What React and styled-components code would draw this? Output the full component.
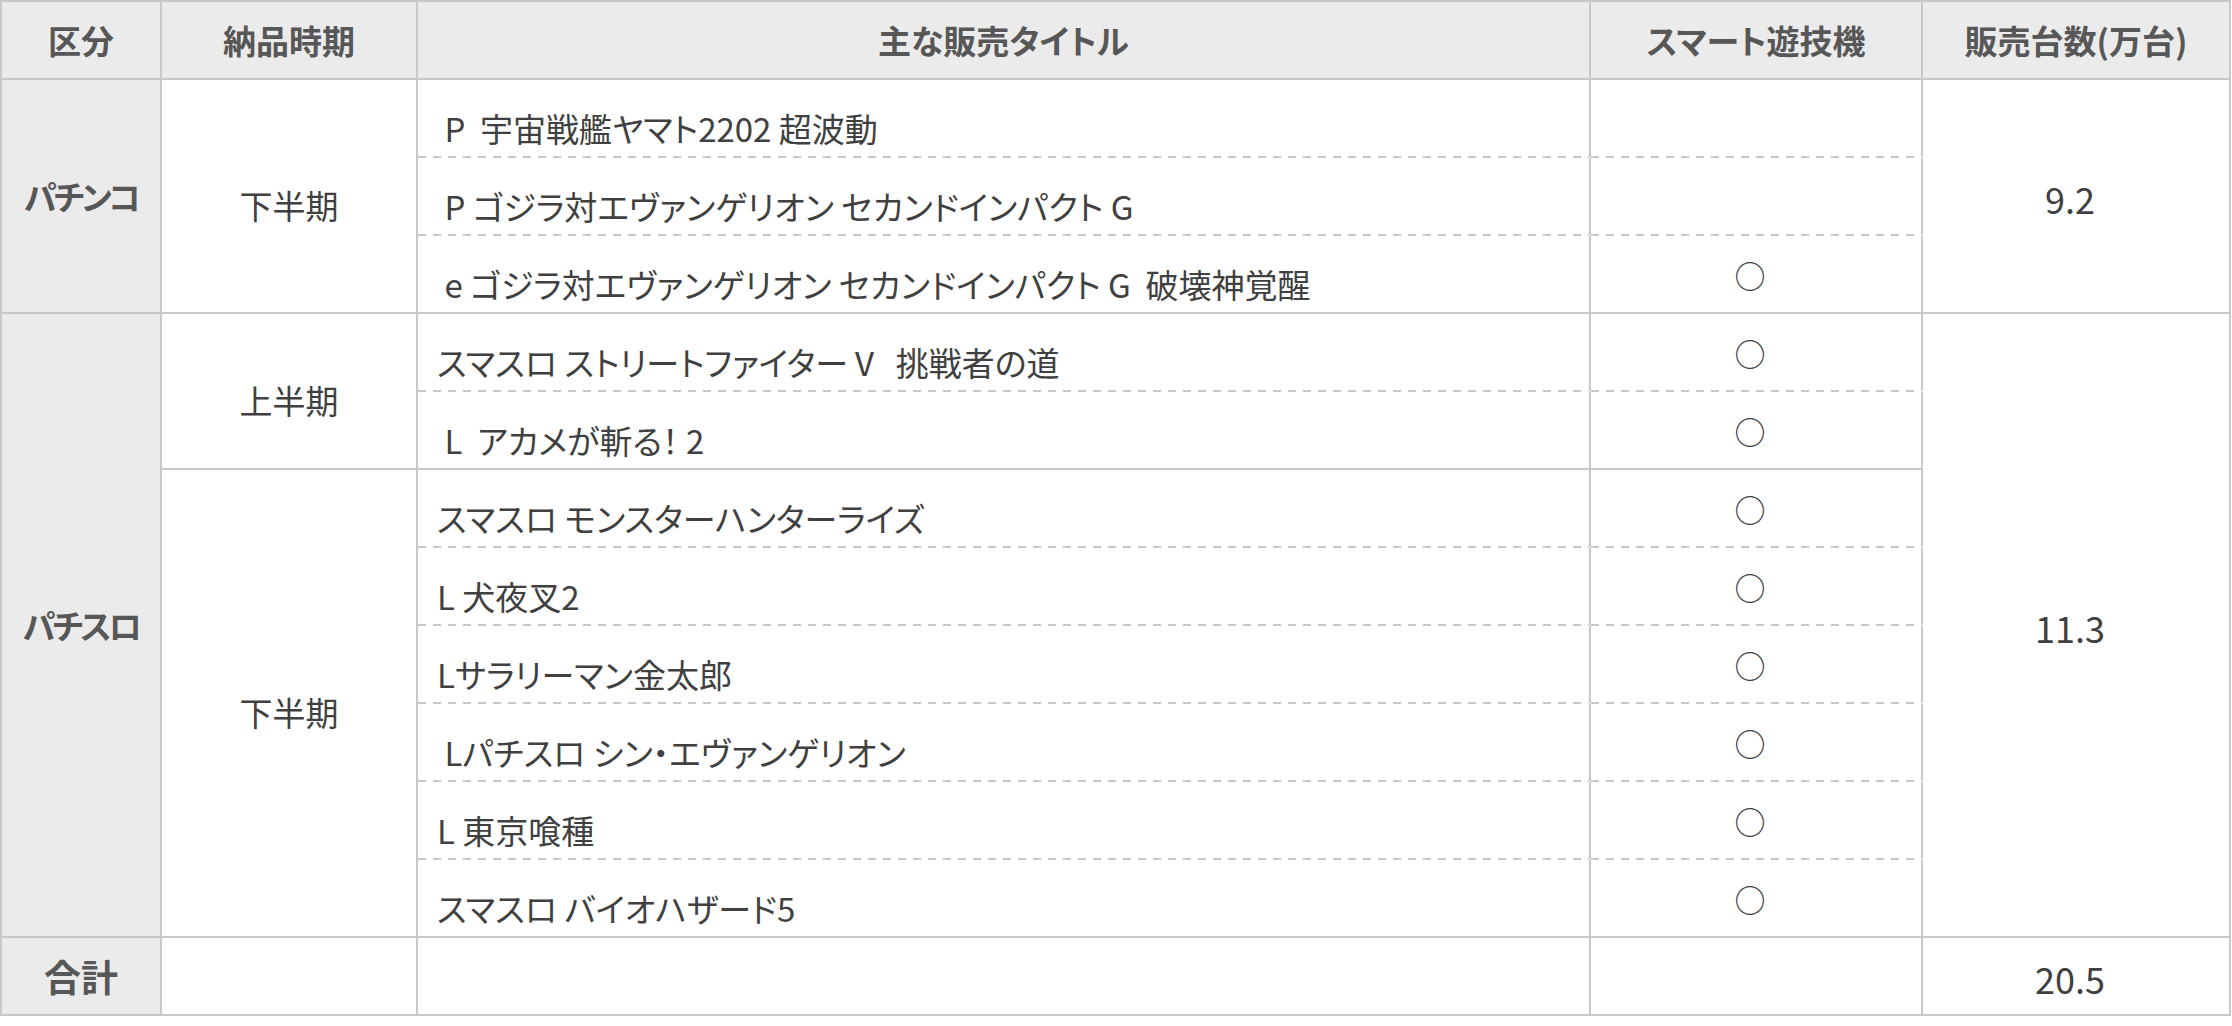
import React from "react";
import styled, { createGlobalStyle, css } from "styled-components";

const LINE = "#c8c8c8";

const GlobalStyle = createGlobalStyle`
    html, body {
        margin: 0;
        padding: 0;
        background: #ffffff;
    }
`;

const Grid = styled.div`
    display: grid;
    grid-template-columns: 160px 256px 1173px 332px 308px;
    grid-auto-rows: 78px;
    width: max-content;
    border-top: 2px solid ${LINE};
    border-left: 2px solid ${LINE};
    font-family: "Noto Sans CJK JP", "Noto Sans", sans-serif;
    font-feature-settings: "palt";
    color: #404040;
`;

const Cell = styled.div`
    box-sizing: border-box;
    display: flex;
    align-items: center;
    justify-content: center;
    border-right: 2px solid ${LINE};
    border-bottom: 2px solid ${LINE};
    grid-row: span ${({ $rows = 1 }) => $rows};
    font-size: 33px;
    line-height: 1;
    white-space: pre;

    ${({ $dashed }) =>
        $dashed &&
        css`
            border-bottom-color: transparent;
            background: linear-gradient(to right, ${LINE} 8px, transparent 8px)
                left bottom / 15px 2px repeat-x border-box;
        `}
`;

const HeadCell = styled(Cell)`
    background: #ebebeb;
    color: #575757;
    font-weight: 700;
`;

const GroupCell = styled(Cell)`
    background: #ebebeb;
    color: #575757;
    font-weight: 700;
    font-size: ${({ $big }) => ($big ? "37px" : "33px")};
    letter-spacing: ${({ $big }) => ($big ? "0" : "-3px")};
`;

const PeriodCell = styled(Cell)`
    padding-top: 19px;
`;

const TitleCell = styled(Cell)`
    justify-content: flex-start;
    padding-left: 19px;
    padding-top: 20px;
`;

const SmartCell = styled(Cell)`
    font-size: 31px;
    padding-right: 12px;
`;

const AmountCell = styled(Cell)`
    font-size: 36px;
    padding-top: 4px;
    padding-right: 12px;
`;

const groups = [
    {
        name: "パチンコ",
        amount: "9.2",
        periods: [
            {
                name: "下半期",
                titles: [
                    [" P  宇宙戦艦ヤマト2202 超波動", false],
                    [" P ゴジラ対エヴァンゲリオン セカンドインパクト G", false],
                    [" e ゴジラ対エヴァンゲリオン セカンドインパクト G  破壊神覚醒", true]
                ]
            }
        ]
    },
    {
        name: "パチスロ",
        amount: "11.3",
        periods: [
            {
                name: "上半期",
                titles: [
                    ["スマスロ ストリートファイターⅤ  挑戦者の道", true],
                    [" L  アカメが斬る！ 2", true]
                ]
            },
            {
                name: "下半期",
                titles: [
                    ["スマスロ モンスターハンターライズ", true],
                    ["L 犬夜叉2", true],
                    ["Lサラリーマン金太郎", true],
                    [" Lパチスロ シン・エヴァンゲリオン", true],
                    ["L 東京喰種", true],
                    ["スマスロ バイオハザード5", true]
                ]
            }
        ]
    }
];

const countRows = (group) =>
    group.periods.reduce((sum, p) => sum + p.titles.length, 0);

const App = () => {
    return (
        <>
            <GlobalStyle />
            <Grid>
                <HeadCell>区分</HeadCell>
                <HeadCell>納品時期</HeadCell>
                <HeadCell>主な販売タイトル</HeadCell>
                <HeadCell>スマート遊技機</HeadCell>
                <HeadCell>販売台数(万台)</HeadCell>

                {groups.map((group) => {
                    const rows = countRows(group);
                    return group.periods.map((period, pi) =>
                        period.titles.map(([title, smart], ti) => {
                            const last = ti === period.titles.length - 1;
                            return (
                                <React.Fragment key={group.name + pi + ti}>
                                    {pi === 0 && ti === 0 && (
                                        <GroupCell $rows={rows}>
                                            {group.name}
                                        </GroupCell>
                                    )}
                                    {ti === 0 && (
                                        <PeriodCell $rows={period.titles.length}>
                                            {period.name}
                                        </PeriodCell>
                                    )}
                                    <TitleCell $dashed={!last}>{title}</TitleCell>
                                    <SmartCell $dashed={!last}>
                                        {smart ? "○" : ""}
                                    </SmartCell>
                                    {pi === 0 && ti === 0 && (
                                        <AmountCell $rows={rows}>
                                            {group.amount}
                                        </AmountCell>
                                    )}
                                </React.Fragment>
                            );
                        })
                    );
                })}

                <GroupCell $big>合計</GroupCell>
                <Cell />
                <Cell />
                <Cell />
                <AmountCell>20.5</AmountCell>
            </Grid>
        </>
    );
};

export default App;
